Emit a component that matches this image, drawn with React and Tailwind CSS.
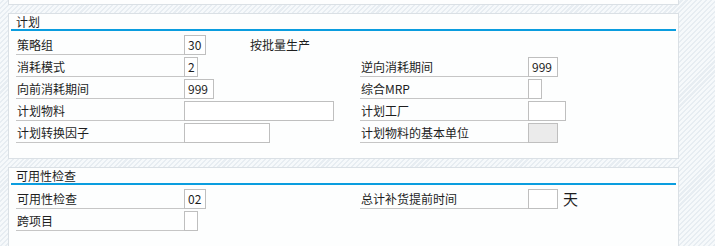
import React from "react";

const font = { fontFamily: '"Noto Sans CJK SC", "Noto Sans", sans-serif' };

function Label({ children }) {
  return (
    <div className="w-[168px] h-[20px] border-b border-[#c6c6c6] pl-[1px] text-[12px] leading-[20px] text-[#1e1e1e] whitespace-nowrap">
      {children}
    </div>
  );
}

function Box({ w, value, gray }) {
  return (
    <div
      className={`${w} h-[20px] border border-[#bfbfbf] ${gray ? "bg-[#ebebeb]" : "bg-white"} px-[3px] text-[12px] leading-[18px] text-[#1e1e1e]`}
    >
      {value}
    </div>
  );
}

function Row({ left, right }) {
  return (
    <div className="flex h-[20px]">
      <div className="w-[344px] flex">{left}</div>
      <div className="flex">{right}</div>
    </div>
  );
}

function Panel({ title, h, children }) {
  return (
    <div className={`w-[671px] ${h} border border-[#dae0e5] bg-[#fdfefe] px-[2px]`}>
      <div className="h-[17px] border-b-2 border-[#0a9ddf] pl-[5px] text-[12px] leading-[15px] text-[#1e1e1e]">
        {title}
      </div>
      <div className="mt-[4px] pl-[5px] flex flex-col gap-[2px]">{children}</div>
    </div>
  );
}

export default function App() {
  return (
    <div
      style={font}
      className="w-[715px] h-[246px] overflow-hidden bg-[#eef3f7] bg-[image:repeating-linear-gradient(135deg,#f6f9fb_0px,#f6f9fb_2px,#e7edf2_2px,#e7edf2_3.5px)]"
    >
      <div className="pl-[8px]">
        <div className="w-[671px] h-[5px] border-x border-b border-[#dae0e5] bg-[#fdfefe]" />
        <div className="mt-[8px]">
          <Panel title="计划" h="h-[146px]">
            <Row
              left={
                <>
                  <Label>策略组</Label>
                  <Box w="w-[22px]" value="30" />
                  <div className="ml-[44px] text-[12px] leading-[20px] text-[#1e1e1e] whitespace-nowrap">按批量生产</div>
                </>
              }
            />
            <Row
              left={
                <>
                  <Label>消耗模式</Label>
                  <Box w="w-[14px]" value="2" />
                </>
              }
              right={
                <>
                  <Label>逆向消耗期间</Label>
                  <Box w="w-[30px]" value="999" />
                </>
              }
            />
            <Row
              left={
                <>
                  <Label>向前消耗期间</Label>
                  <Box w="w-[30px]" value="999" />
                </>
              }
              right={
                <>
                  <Label>综合MRP</Label>
                  <Box w="w-[14px]" value="" />
                </>
              }
            />
            <Row
              left={
                <>
                  <Label>计划物料</Label>
                  <Box w="w-[150px]" value="" />
                </>
              }
              right={
                <>
                  <Label>计划工厂</Label>
                  <Box w="w-[38px]" value="" />
                </>
              }
            />
            <Row
              left={
                <>
                  <Label>计划转换因子</Label>
                  <Box w="w-[86px]" value="" />
                </>
              }
              right={
                <>
                  <Label>计划物料的基本单位</Label>
                  <Box w="w-[30px]" value="" gray />
                </>
              }
            />
          </Panel>
        </div>
        <div className="mt-[8px]">
          <Panel title="可用性检查" h="h-[100px]">
            <Row
              left={
                <>
                  <Label>可用性检查</Label>
                  <Box w="w-[22px]" value="02" />
                </>
              }
              right={
                <>
                  <Label>总计补货提前时间</Label>
                  <Box w="w-[30px]" value="" />
                  <div className="ml-[5px] text-[15px] leading-[20px] text-[#1e1e1e]">天</div>
                </>
              }
            />
            <Row
              left={
                <>
                  <Label>跨项目</Label>
                  <Box w="w-[14px]" value="" />
                </>
              }
            />
          </Panel>
        </div>
      </div>
    </div>
  );
}
